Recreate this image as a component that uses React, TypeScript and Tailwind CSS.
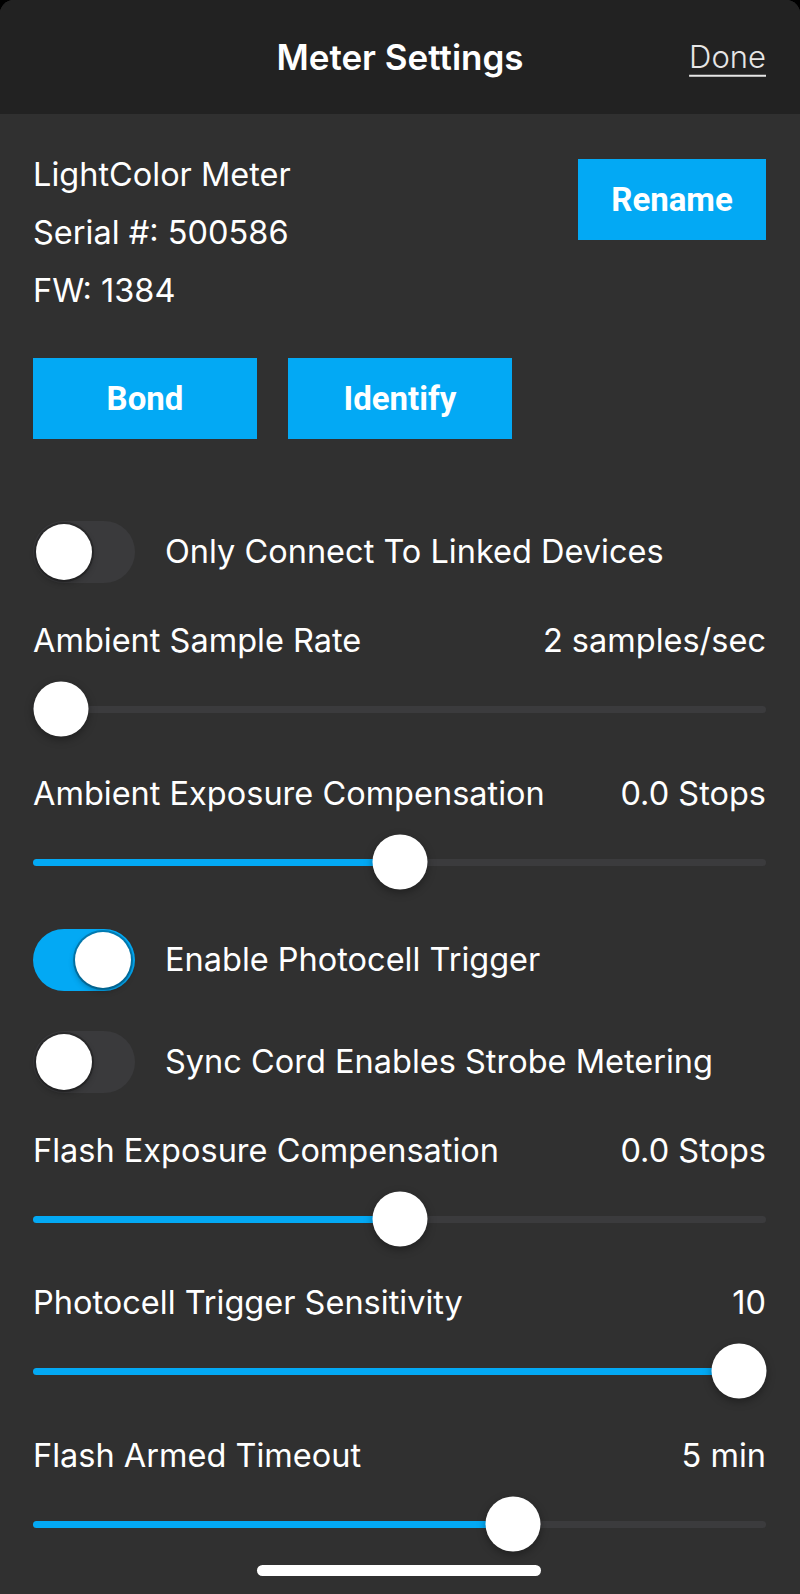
import { useState } from "react";

const BLUE = "bg-[#03a9f4]";

interface SliderRowProps {
  label: string;
  value: string;
  pos: number; // 0..1
  className?: string;
}

const SliderRow = ({ label, value, pos, className = "" }: SliderRowProps) => {
  // thumb center travels from 27.5px to (track width - 27.5px)
  const center = `calc(27.5px + (100% - 55px) * ${pos})`;
  return (
    <div className={className}>
      <div className="flex items-center justify-between h-[40px] text-[32.5px] leading-[40px] text-white whitespace-nowrap">
        <span>{label}</span>
        <span>{value}</span>
      </div>
      <div className="relative mt-[20px] h-[56px] flex items-center">
        <div className="relative w-full h-[7px] rounded-full bg-[#3b3b3d]">
          <div
            className={`absolute left-0 top-0 h-full rounded-full ${BLUE}`}
            style={{ width: pos === 0 ? 0 : center }}
          />
        </div>
        <div
          className="absolute top-1/2 w-[55px] h-[55px] -translate-x-1/2 -translate-y-1/2 rounded-full bg-white shadow-[0_3px_8px_rgba(0,0,0,0.35)]"
          style={{ left: center }}
        />
      </div>
    </div>
  );
};

interface ToggleRowProps {
  label: string;
  on: boolean;
  className?: string;
}

const ToggleRow = ({ label, on, className = "" }: ToggleRowProps) => {
  const [checked, setChecked] = useState(on);
  return (
    <div className={`flex items-center h-[62px] ${className}`}>
      <button
        onClick={() => setChecked(!checked)}
        className={`relative w-[102px] h-[62px] rounded-full shrink-0 ${
          checked ? "bg-[#03a9f4]" : "bg-[#3a3a3c]"
        }`}
      >
        <span
          className={`absolute top-[3px] w-[56px] h-[56px] rounded-full bg-white shadow-[0_0_0_2px_rgba(0,0,0,0.25),0_3px_6px_rgba(0,0,0,0.3)] ${
            checked ? "right-[4px]" : "left-[3px]"
          }`}
        />
      </button>
      <span className="ml-[30px] text-[32.5px] text-white whitespace-nowrap">
        {label}
      </span>
    </div>
  );
};

const App = () => {
  return (
    <div
      className="w-[800px] h-[1594px] bg-black overflow-hidden"
      style={{ fontFamily: "Inter, 'Noto Sans', sans-serif" }}
    >
      <div className="flex flex-col h-full rounded-t-[14px] overflow-hidden bg-[#303030]">
        {/* Header */}
        <div className="relative h-[114px] shrink-0 bg-[#222222] flex items-center justify-center">
          <span className="text-[35px] font-semibold text-white">
            Meter Settings
          </span>
          <span className="absolute right-[34px] top-1/2 -translate-y-1/2 text-[31px] font-light text-[#e6e6e6] underline decoration-2 underline-offset-[7px]">
            Done
          </span>
        </div>

        {/* Body */}
        <div className="flex flex-col pl-[33px] pr-[34px] pt-[32px]">
          <div className="flex justify-between">
            <div className="text-[32.5px] leading-[58px] text-white">
              <div>LightColor Meter</div>
              <div>Serial #: 500586</div>
              <div>FW: 1384</div>
            </div>
            <button
              className={`mt-[13px] w-[188px] h-[81px] ${BLUE} text-white text-[33px] font-bold`}
              style={{ fontFamily: "Roboto, sans-serif" }}
            >
              Rename
            </button>
          </div>

          <div
            className="flex gap-[31px] mt-[38px] text-white text-[33px] font-bold"
            style={{ fontFamily: "Roboto, sans-serif" }}
          >
            <button className={`w-[224px] h-[81px] ${BLUE}`}>Bond</button>
            <button className={`w-[224px] h-[81px] ${BLUE}`}>Identify</button>
          </div>

          <ToggleRow
            label="Only Connect To Linked Devices"
            on={false}
            className="mt-[82px]"
          />

          <SliderRow
            label="Ambient Sample Rate"
            value="2 samples/sec"
            pos={0}
            className="mt-[38px]"
          />
          <SliderRow
            label="Ambient Exposure Compensation"
            value="0.0 Stops"
            pos={0.5}
            className="mt-[37px]"
          />

          <ToggleRow
            label="Enable Photocell Trigger"
            on={true}
            className="mt-[39px]"
          />
          <ToggleRow
            label="Sync Cord Enables Strobe Metering"
            on={false}
            className="mt-[40px]"
          />

          <SliderRow
            label="Flash Exposure Compensation"
            value="0.0 Stops"
            pos={0.5}
            className="mt-[38px]"
          />
          <SliderRow
            label="Photocell Trigger Sensitivity"
            value="10"
            pos={1}
            className="mt-[36px]"
          />
          <SliderRow
            label="Flash Armed Timeout"
            value="5 min"
            pos={0.667}
            className="mt-[37px]"
          />

          {/* Home indicator */}
          <div className="mt-[13px] self-center -ml-px w-[284px] h-[11px] rounded-full bg-white" />
        </div>
      </div>
    </div>
  );
};

export default App;
